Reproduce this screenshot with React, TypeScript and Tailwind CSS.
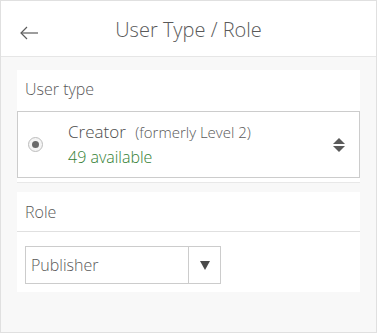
import React from 'react';

export default function App() {
  return (
    <div className="w-[377px] h-[333px] border border-[#e0e0e0] bg-[#f8f8f8] flex flex-col font-['Open_Sans',sans-serif] font-light overflow-hidden">
      {/* Header */}
      <div className="h-[56px] shrink-0 bg-white border-b border-[#e6e6e6] flex items-center relative">
        <button className="absolute left-[18px] top-[24px] text-[#5c5c5c]" aria-label="Back">
          <svg width="20" height="16" viewBox="0 0 20 16" fill="none" stroke="currentColor" strokeWidth="1.2">
            <path d="M19 8H2" />
            <path d="M8 2L2 8l6 6" />
          </svg>
        </button>
        <h1 className="w-full text-center text-[20px] text-[#595959] pt-[3px]">User Type / Role</h1>
      </div>

      <div className="px-[16px] pt-[13px] flex flex-col gap-[9px]">
        {/* User type card */}
        <div className="bg-white border-b border-[#e8e8e8]">
          <div className="h-[41px] flex items-center px-[8px] pb-[3px] text-[16px] text-[#595959]">User type</div>
          <div className="h-[67px] border border-[#cccccc] flex items-center pl-[10px] pr-[13px]">
            <span className="w-[15px] h-[15px] rounded-full border border-[#bdbdbd] bg-[#f4f4f4] flex items-center justify-center">
              <span className="w-[7px] h-[7px] rounded-full bg-[#6a6a6a]" />
            </span>
            <div className="ml-[25px] flex-1 leading-[25px]">
              <div className="text-[17px] text-[#4c4c4c]">
                Creator <span className="text-[15px] text-[#595959] ml-[5px]">(formerly Level 2)</span>
              </div>
              <div className="text-[16px] text-[#338033]">49 available</div>
            </div>
            <svg width="14" height="16" viewBox="0 0 14 16" className="text-[#5a5a5a]">
              <path d="M7 1L13 7H1z" fill="currentColor" />
              <path d="M7 15L13 9H1z" fill="currentColor" />
            </svg>
          </div>
          <div className="h-[4px]" />
        </div>

        {/* Role card */}
        <div className="bg-white">
          <div className="h-[40px] border-b border-[#e0e0e0] flex items-center px-[8px] text-[16px] text-[#595959]">Role</div>
          <div className="px-[8px] pt-[14px] pb-[8px]">
            <div className="w-[196px] h-[38px] border border-[#cccccc] flex">
              <div className="flex-1 flex items-center pl-[5px] text-[16px] text-[#595959]">Publisher</div>
              <div className="w-[32px] border-l border-[#cccccc] flex items-center justify-center">
                <svg width="10" height="10" viewBox="0 0 10 10">
                  <path d="M0 1h10L5 10z" fill="#4a4a4a" />
                </svg>
              </div>
            </div>
          </div>
        </div>
      </div>
    </div>
  );
}
